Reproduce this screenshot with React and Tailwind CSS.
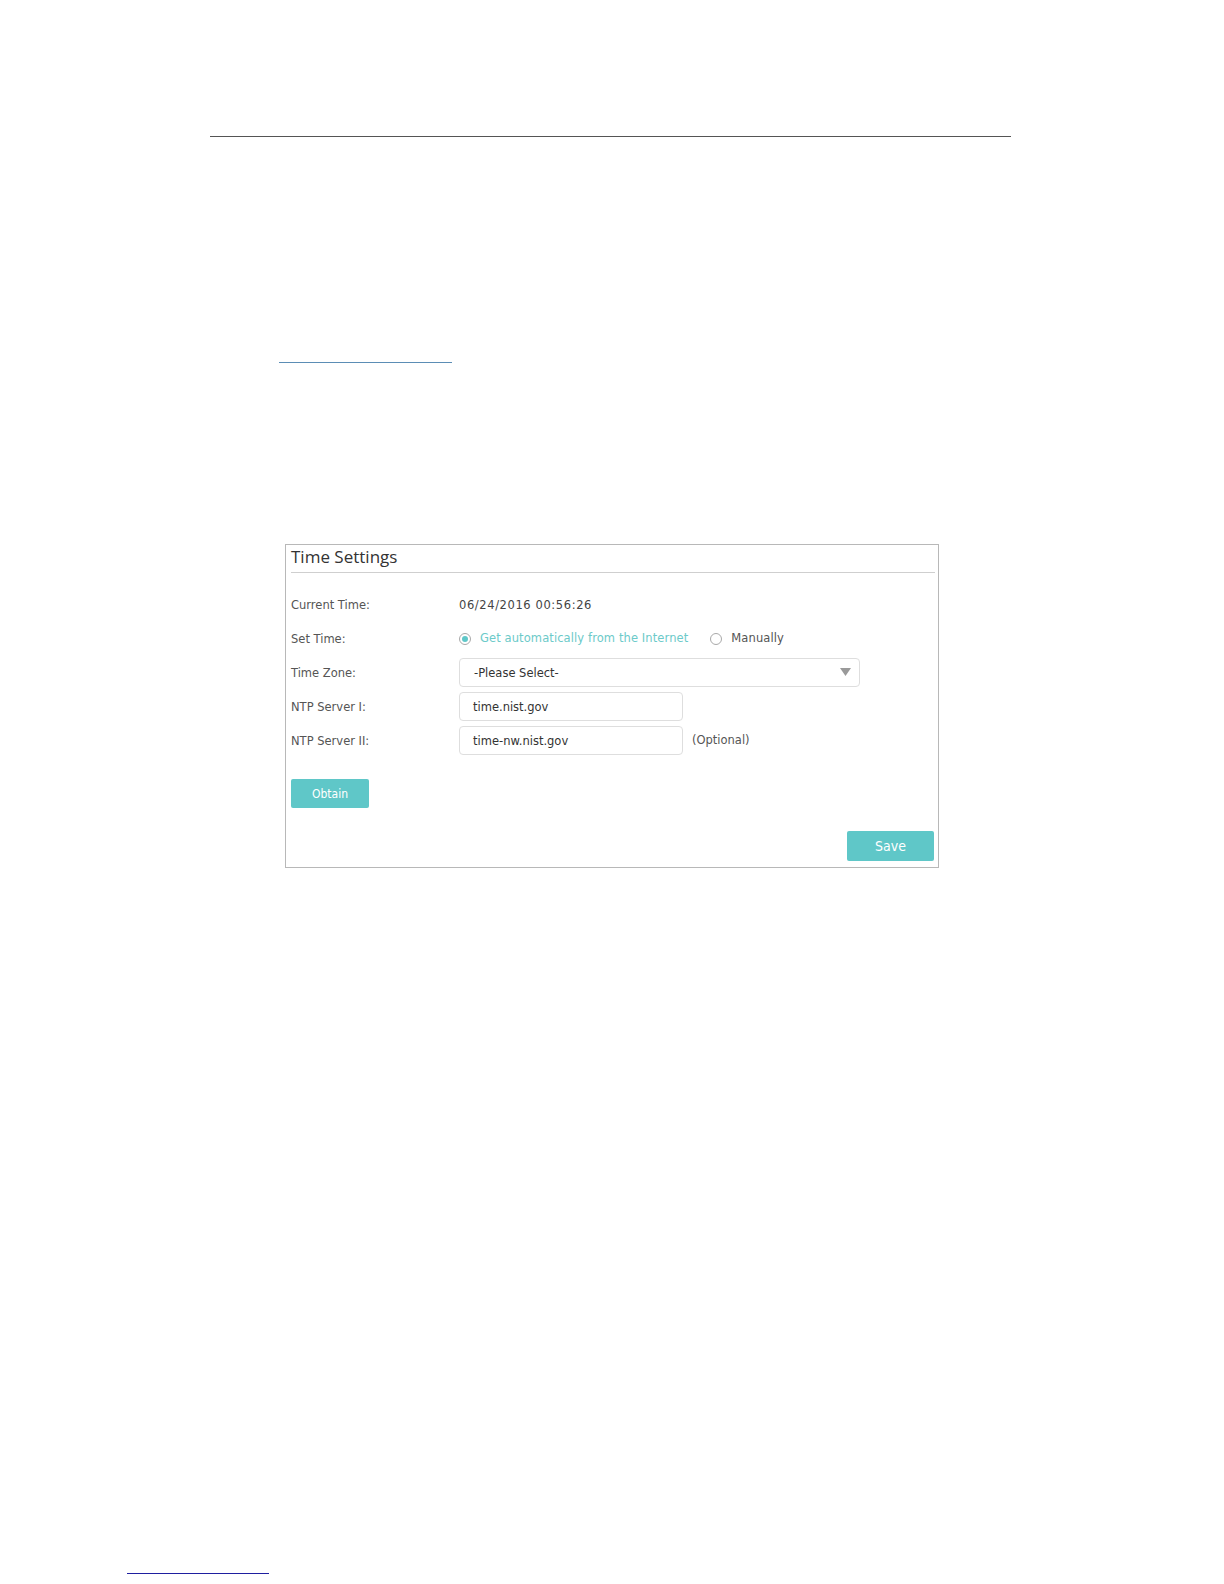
import React, { useState } from 'react';

const Row = ({ label, children }) => (
  <div className="flex items-center h-[34px]">
    <div className="w-[168px] shrink-0 text-[#555] text-[11.5px] pt-[3px]">{label}</div>
    <div className="flex items-center">{children}</div>
  </div>
);

const Radio = ({ checked, label, onClick }) => (
  <button type="button" onClick={onClick} className="flex items-center gap-[9px]">
    <span className="w-[12px] h-[12px] rounded-full border border-[#a9a9a9] bg-white flex items-center justify-center">
      {checked && <span className="w-[6px] h-[6px] rounded-full bg-[#5fc7c8]" />}
    </span>
    <span className={checked ? 'text-[#6ccac9] tracking-[0.1px]' : 'text-[#555] tracking-[0.1px]'}>{label}</span>
  </button>
);

const App = () => {
  const [mode, setMode] = useState('auto');

  return (
    <div className="w-[1224px] h-[1584px] bg-white flex flex-col font-['DejaVu_Sans',sans-serif]">
      {/* header rule */}
      <div className="mt-[136px] ml-[210px] w-[801px] h-[1px] bg-[#555]" />

      {/* link underline */}
      <div className="mt-[225px] ml-[279px] w-[173px] h-[1px] bg-[#5b8db5]" />

      {/* Time Settings panel */}
      <div className="mt-[181px] ml-[285px] w-[654px] h-[324px] border border-[#b8b8b8] flex flex-col">
        <div className="mx-[5px] mr-[3px] h-[28px] border-b border-[#cfcfcf] flex items-center font-['Open_Sans',sans-serif] text-[17px] text-[#333] leading-none pb-[4px]">
          Time Settings
        </div>

        <div className="mt-[14px] ml-[5px] flex flex-col text-[11.5px]">
          <Row label="Current Time:">
            <span className="text-[#444] tracking-[0.6px] pt-[3px]">06/24/2016 00:56:26</span>
          </Row>
          <Row label="Set Time:">
            <div className="flex items-center gap-[22px] text-[11.5px] pt-[2px]">
              <Radio checked={mode === 'auto'} label="Get automatically from the Internet" onClick={() => setMode('auto')} />
              <Radio checked={mode === 'manual'} label="Manually" onClick={() => setMode('manual')} />
            </div>
          </Row>
          <Row label="Time Zone:">
            <div className="w-[401px] h-[29px] border border-[#dedede] rounded-[4px] flex items-center justify-between pl-[14px] pr-[8px] text-[#333]">
              <span className="pt-[3px]">-Please Select-</span>
              <svg width="11" height="8" viewBox="0 0 11 8">
                <path d="M0 0 L11 0 L5.5 8 Z" fill="#9a9a9a" />
              </svg>
            </div>
          </Row>
          <Row label="NTP Server I:">
            <div className="w-[224px] h-[29px] border border-[#dedede] rounded-[4px] flex items-center pl-[13px] pt-[3px] text-[#333]">
              time.nist.gov
            </div>
          </Row>
          <Row label="NTP Server II:">
            <div className="w-[224px] h-[29px] border border-[#dedede] rounded-[4px] flex items-center pl-[13px] pt-[3px] text-[#333]">
              time-nw.nist.gov
            </div>
            <span className="ml-[9px] pt-[2px] text-[#555]">(Optional)</span>
          </Row>
        </div>

        <div className="mt-[22px] ml-[5px]">
          <button
            type="button"
            className="w-[78px] h-[29px] rounded-[2px] bg-[#5fc7c8] text-white text-[12px] font-['DejaVu_Sans_Condensed','DejaVu_Sans',sans-serif]"
          >
            Obtain
          </button>
        </div>

        <div className="mt-[23px] mr-[4px] flex justify-end">
          <button
            type="button"
            className="w-[87px] h-[30px] rounded-[2px] bg-[#5fc7c8] text-white text-[14px] font-['DejaVu_Sans_Condensed','DejaVu_Sans',sans-serif]"
          >
            Save
          </button>
        </div>
      </div>

      {/* footer link underline */}
      <div className="mt-[705px] ml-[127px] w-[142px] h-[1px] bg-[#1f1fa0]" />
    </div>
  );
};

export default App;
